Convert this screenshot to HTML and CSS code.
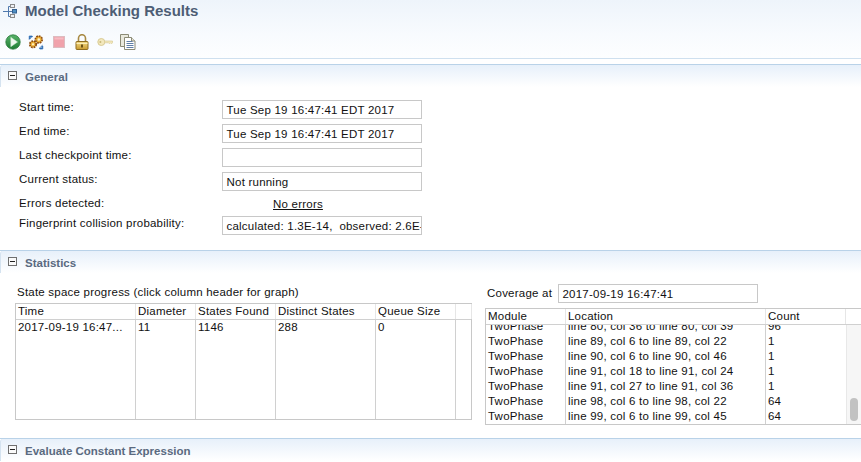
FILE: index.html
```html
<!DOCTYPE html>
<html lang="en">
<head>
<meta charset="utf-8">
<title>Model Checking Results</title>
<link rel="stylesheet" href="styles.css">
</head>
<body>
<div class="page">
  <header class="head">
    <div class="title-row">
      <svg class="title-icon" width="16" height="14" viewBox="0 0 16 14" fill="none">
        <path d="M0 7.500h14M5.500 2.500v10M5.500 2.500h2M5.500 12.500h2" stroke="#4f78ad"/>
        <rect x="7.500" y="0.500" width="4" height="3" fill="#eef1f5" stroke="#8a8a8a"/>
        <rect x="7.500" y="10.500" width="4" height="3" fill="#eef1f5" stroke="#8a8a8a"/>
        <rect x="9.500" y="5.500" width="4" height="3.500" fill="#4f8fc4" stroke="#34608f"/>
      </svg>
      <h1 class="title">Model Checking Results</h1>
    </div>
    <div class="toolbar">
      <svg class="tool" width="16" height="16" viewBox="0 0 16 16"><defs><linearGradient id="pl" x1="0" y1="0" x2="0" y2="1"><stop offset="0" stop-color="#58b36a"/><stop offset="1" stop-color="#1f7d33"/></linearGradient></defs><circle cx="8" cy="8" r="7.200" fill="url(#pl)" stroke="#2a7a3b" stroke-width=".8"/><path d="M5.800 3.300l6.700 4.700-6.700 4.700z" fill="#eef8ee" stroke="#cfe8d2" stroke-width=".5"/></svg>
      <svg class="tool" width="16" height="16" viewBox="0 0 16 16"><circle cx="10.800" cy="5.500" r="3.400" fill="#efb43a" stroke="#8e4d12" stroke-width="1.800" stroke-dasharray="1.700 .9"/><circle cx="10.800" cy="5.500" r="1.200" fill="#fff3cf"/><circle cx="5" cy="10.300" r="3.200" fill="#efb43a" stroke="#8e4d12" stroke-width="1.800" stroke-dasharray="1.700 .9"/><circle cx="5" cy="10.300" r="1.100" fill="#fff3cf"/><path d="M1 5.500l3.500-3.500M1.200 2h3v.9h-2.100v2.100h-.9zM11 14.500l3.500-3.300M14.800 15h-3v-.9h2.100v-2.100h.9z" fill="#2f6fb5" stroke="#2f6fb5" stroke-width=".7"/></svg>
      <svg class="tool" width="16" height="16" viewBox="0 0 16 16"><rect x="2.500" y="2.500" width="11" height="11" fill="#f0a2ab" stroke="#dcbcc0"/><rect x="3.500" y="3.500" width="9" height="2" fill="#f5bcc3"/></svg>
      <svg class="tool" width="16" height="16" viewBox="0 0 16 16"><defs><linearGradient id="lk" x1="0" y1="0" x2="0" y2="1"><stop offset="0" stop-color="#f4db86"/><stop offset="1" stop-color="#c99b30"/></linearGradient></defs><path d="M4.500 8V4.200a3.500 3.500 0 0 1 7 0V8" fill="none" stroke="#a88a44" stroke-width="1.600"/><rect x="2" y="7.500" width="12" height="8" rx=".8" fill="url(#lk)" stroke="#8f6d20"/><path d="M2.500 9.500h11" stroke="#fbeeb8"/><rect x="7" y="10.500" width="2" height="3" fill="#6b5216"/></svg>
      <svg class="tool" width="16" height="16" viewBox="0 0 16 16"><circle cx="4.300" cy="8" r="3.500" fill="#f3e8bd" stroke="#d9cb95"/><circle cx="3.400" cy="8" r="1" fill="#c8b878"/><path d="M7.500 7h8v1.800l-1 1-1-1-1 1-1-1h-4z" fill="#f3e8bd" stroke="#d9cb95" stroke-width=".7"/></svg>
      <svg class="tool" width="16" height="16" viewBox="0 0 16 16" fill="#fff" stroke="#8b8b76"><path d="M.5.500h8v12h-8z" fill="#e9e9dd"/><path d="M4.500 3.500h7l3.500 3.500v8.500H4.500z"/><path d="M11.500 3.500v3.500H15" fill="#e4e4d6"/><path d="M6.500 7.500h6M6.500 9.500h7M6.500 11.500h7M6.500 13.500h7" stroke="#5f7ea6"/></svg>
    </div>
  </header>

  <section class="section section-general">
    <div class="section-head"><span class="twisty"></span><h2 class="section-title">General</h2></div>
    <div class="form">
      <div class="row"><span class="label">Start time:</span><div class="field">Tue Sep 19 16:47:41 EDT 2017</div></div>
      <div class="row"><span class="label">End time:</span><div class="field">Tue Sep 19 16:47:41 EDT 2017</div></div>
      <div class="row"><span class="label">Last checkpoint time:</span><div class="field"></div></div>
      <div class="row"><span class="label">Current status:</span><div class="field">Not running</div></div>
      <div class="row row-errors"><span class="label">Errors detected:</span><a class="link">No errors</a></div>
      <div class="row"><span class="label">Fingerprint collision probability:</span><div class="field field-clip">calculated: 1.3E-14,&nbsp; observed: 2.6E-14</div></div>
    </div>
  </section>

  <section class="section section-stats">
    <div class="section-head"><span class="twisty"></span><h2 class="section-title">Statistics</h2></div>
    <div class="stats">
      <div class="stats-left">
        <div class="caption">State space progress (click column header for graph)</div>
        <div class="table table-progress">
          <div class="thead"><span class="c1">Time</span><span class="c2">Diameter</span><span class="c3">States Found</span><span class="c4">Distinct States</span><span class="c5">Queue Size</span><span class="c6"></span></div>
          <div class="tbody">
            <div class="tr"><span class="c1">2017-09-19 16:47...</span><span class="c2">11</span><span class="c3">1146</span><span class="c4">288</span><span class="c5">0</span><span class="c6"></span></div>
          </div>
          <div class="col-lines"><i class="c1"></i><i class="c2"></i><i class="c3"></i><i class="c4"></i><i class="c5"></i></div>
        </div>
      </div>
      <div class="stats-right">
        <div class="coverage"><span>Coverage at</span><div class="field field-cov">2017-09-19 16:47:41</div></div>
        <div class="table table-cov">
          <div class="thead"><span class="m1">Module</span><span class="m2">Location</span><span class="m3">Count</span><span class="m4"></span></div>
          <div class="cov-body">
            <div class="cov-rows">
              <div class="tr"><span class="m1">TwoPhase</span><span class="m2">line 80, col 36 to line 80, col 39</span><span class="m3">96</span></div>
              <div class="tr"><span class="m1">TwoPhase</span><span class="m2">line 89, col 6 to line 89, col 22</span><span class="m3">1</span></div>
              <div class="tr"><span class="m1">TwoPhase</span><span class="m2">line 90, col 6 to line 90, col 46</span><span class="m3">1</span></div>
              <div class="tr"><span class="m1">TwoPhase</span><span class="m2">line 91, col 18 to line 91, col 24</span><span class="m3">1</span></div>
              <div class="tr"><span class="m1">TwoPhase</span><span class="m2">line 91, col 27 to line 91, col 36</span><span class="m3">1</span></div>
              <div class="tr"><span class="m1">TwoPhase</span><span class="m2">line 98, col 6 to line 98, col 22</span><span class="m3">64</span></div>
              <div class="tr"><span class="m1">TwoPhase</span><span class="m2">line 99, col 6 to line 99, col 45</span><span class="m3">64</span></div>
            </div>
            <div class="scrollbar"><div class="thumb"></div></div>
          </div>
        </div>
      </div>
    </div>
  </section>

  <section class="section section-eval">
    <div class="section-head"><span class="twisty"></span><h2 class="section-title">Evaluate Constant Expression</h2></div>
  </section>
</div>
</body>
</html>
```
FILE: styles.css
```css
* { box-sizing: border-box; }
html, body { margin: 0; padding: 0; }
body {
  width: 861px;
  height: 462px;
  overflow: hidden;
  background: #fff;
  color: #111;
  font: 11.5px/15px "Liberation Sans", Arial, sans-serif;
  letter-spacing: .22px;
}
.page { width: 861px; height: 462px; overflow: hidden; }

.head {
  height: 59px;
  padding: 3px 0 0 3px;
  border-bottom: 1px solid #cfe0ef;
  background: linear-gradient(#eef4fb, #f8fbfe 60%, #fdfeff);
}
.title-row { display: flex; align-items: center; gap: 6px; height: 16px; }
.title { margin: 0; font-size: 15px; line-height: 16px; font-weight: bold; letter-spacing: 0; color: #4d5d75; }
.title-icon { display: block; flex: none; }
.toolbar { display: flex; gap: 7px; margin-top: 15px; padding-left: 2px; }
.tool { display: block; }

.section { border-top: 1px solid #b9d2e8; }
.section-head {
  display: flex;
  align-items: center;
  height: 22px;
  padding-left: 7px;
  gap: 8px;
  border-left: 1px solid #d5e3f0;
  border-top-left-radius: 3px;
  background: linear-gradient(#e7f0fa, #fff);
}
.twisty {
  position: relative;
  flex: none;
  width: 9px;
  height: 9px;
  margin-top: -1px;
  border: 1px solid #6f6f6f;
  background: #fafafa;
}
.twisty::after {
  content: "";
  position: absolute;
  left: 1px;
  top: 3px;
  width: 5px;
  height: 1px;
  background: #222;
}
.section-title { margin: 2px 0 0; font-size: 11.5px; line-height: 14px; font-weight: bold; letter-spacing: 0; color: #5a6a80; }

.section-general { height: 186px; margin-top: 5px; }
.form { padding: 12px 0 0 19px; }
.row { display: flex; align-items: flex-start; height: 24px; }
.label { width: 203px; margin-top: 1px; }
.field {
  flex: none;
  width: 200px;
  height: 19px;
  padding: 0 3.500px;
  margin-top: 1px;
  border: 1px solid #c8c8c8;
  line-height: 18px;
  white-space: nowrap;
  overflow: hidden;
  background: #fff;
}
.row-errors { height: 20px; }
.link { margin: 2px 0 0 51px; color: #111; text-decoration: underline; }
.section-stats { height: 188px; }
.stats { display: flex; padding: 0 0 0 15px; }
.stats-left { width: 470px; }
.caption { padding: 12px 0 0 2px; height: 30px; }
.table { position: relative; border: 1px solid #c8c8c8; background: #fff; }
.table-progress { width: 457px; height: 117px; }
.thead { display: flex; height: 16px; border-bottom: 1px solid #d0d0d0; }
.thead span, .tr span { display: block; flex: none; padding-left: 2px; white-space: nowrap; overflow: hidden; }
.thead span { line-height: 15px; box-shadow: inset -1px 0 0 #e6e6e6; }
.tr { display: flex; flex: none; height: 15px; }
.c1 { width: 120px; } .c2 { width: 60px; } .c3 { width: 80px; } .c4 { width: 100px; } .c5 { width: 80px; } .c6 { width: 16px; }
.col-lines { position: absolute; inset: 16px 0 0 0; display: flex; pointer-events: none; }
.col-lines i { display: block; border-right: 1px solid #d0d0d0; }

.stats-right { width: 376px; padding-top: 11px; }
.coverage { display: flex; align-items: center; height: 19px; margin-bottom: 5px; padding-left: 2px; }
.coverage span { width: 71px; }
.field-cov { margin: 0; }
.table-cov { width: 380px; height: 117px; }
.m1 { width: 80px; } .m2 { width: 200px; } .m3 { width: 80px; } .m4 { width: 16px; }
.cov-body { position: relative; display: flex; height: 99px; overflow: hidden; }
.cov-rows {
  display: flex;
  flex-direction: column;
  justify-content: flex-end;
  width: 360px;
  height: 99px;
  background: linear-gradient(#d0d0d0, #d0d0d0) 79px 0 / 1px 100% no-repeat,
              linear-gradient(#d0d0d0, #d0d0d0) 279px 0 / 1px 100% no-repeat;
}
.scrollbar { position: relative; width: 16px; height: 99px; border-left: 1px solid #e8e8e8; background: #f6f6f6; }
.thumb { position: absolute; left: 3px; top: 73px; width: 8px; height: 23px; border-radius: 4px; background: #c2c2c2; }
```
